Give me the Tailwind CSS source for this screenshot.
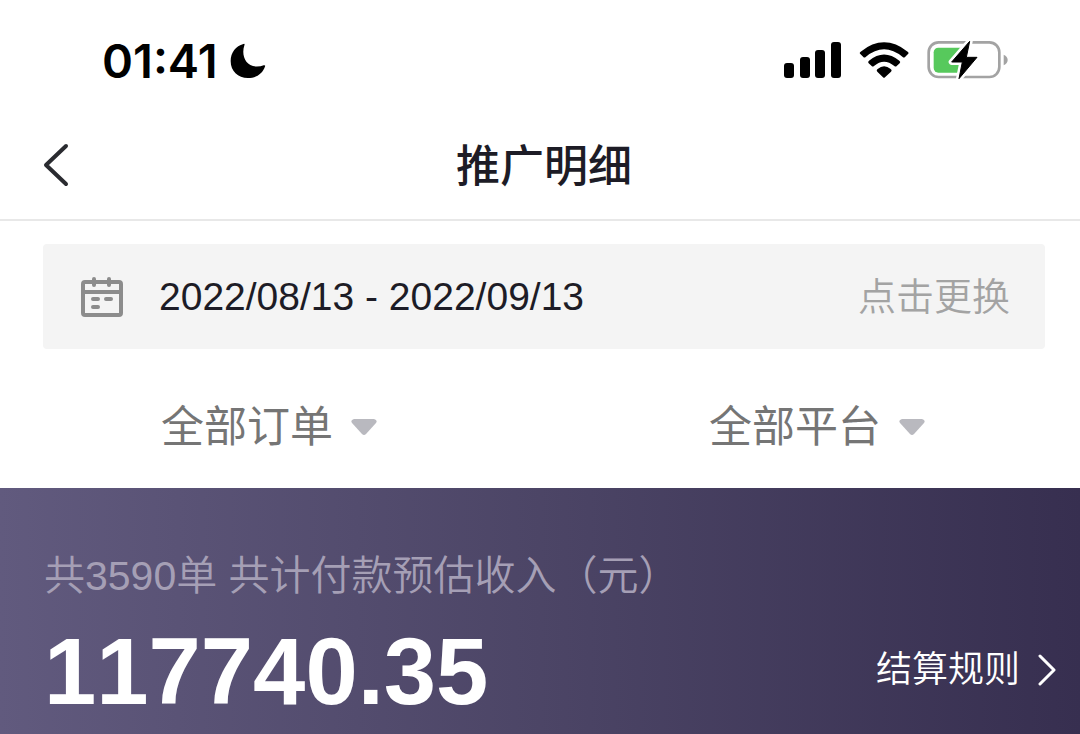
<!DOCTYPE html>
<html lang="zh-CN">
<head>
    <meta charset="UTF-8">
    <meta name="viewport" content="width=device-width, initial-scale=1.0">
    <title>推广明细</title>
    <script src="https://cdn.jsdelivr.net/npm/@tailwindcss/browser@4"></script>
</head>

<body class="bg-white font-['Liberation_Sans','Noto_Sans_CJK_SC',sans-serif]">

<div class="flex min-h-screen flex-col">

    <!-- Status bar -->
    <div class="flex h-[110px] items-center justify-between pt-[10px] pr-[71px] pl-[102px] text-black">
        <div class="flex items-center gap-3">
            <span class="font-['Inter',sans-serif] text-[47px] leading-none font-semibold">01:41</span>
            <svg class="h-9 w-9" viewBox="418 37 110 108" fill="currentColor" aria-hidden="true">
                <path d="M459 42Q464 40 462 46C452 74 464 111 500 111Q512 111 521 107Q527 106 525 111C517 134 498 146 473 146C442 146 420 125 420 94C420 68 436 48 459 42Z"/>
            </svg>
        </div>
        <div class="flex items-center gap-[18px]">
            <svg class="h-9 w-[57px]" viewBox="0 0 57 36" fill="currentColor" aria-hidden="true">
                <rect x="0" y="21" width="10" height="15" rx="3"/>
                <rect x="16" y="15" width="10" height="21" rx="3"/>
                <rect x="31" y="8" width="10" height="28" rx="3"/>
                <rect x="47" y="0" width="10" height="36" rx="3"/>
            </svg>
            <svg class="h-9 w-[50px]" viewBox="269 35 150 108" fill="currentColor" aria-hidden="true">
                <path d="M273 71Q269 68 274 64Q344 8 415 64Q420 68 416 71L407 80Q404 83 400 80Q344 34 289 80Q285 83 282 80Z"/>
                <path d="M298 99Q294 95 299 91Q344 54 390 91Q395 95 391 99L382 107Q379 110 375 107Q344 81 314 107Q310 110 307 107Z"/>
                <path d="M324 124Q320 120 325 116Q344 100 364 116Q369 120 365 124L347 141Q344 144 341 141Z"/>
            </svg>
            <svg class="h-10 w-[82px]" viewBox="474 30 246 120" aria-hidden="true">
                <rect x="479" y="37" width="212" height="104" rx="30" fill="none" stroke="#a3a3a3" stroke-width="8"/>
                <path d="M704 74Q716 80 716 90Q716 100 704 106Z" fill="#a3a3a3"/>
                <rect x="494" y="53" width="94" height="75" rx="14" fill="#57c95c"/>
                <path d="M602 34L548 96H580L570 146L624 82H592Z" fill="#fff" stroke="#fff" stroke-width="18" stroke-linejoin="round"/>
                <path d="M602 34L548 96H580L570 146L624 82H592Z" fill="#000" stroke="#000" stroke-width="3" stroke-linejoin="round"/>
            </svg>
        </div>
    </div>

    <!-- Title bar -->
    <header class="grid h-[111px] grid-cols-[1fr_auto_1fr] items-center border-b-2 border-[#e8e8e8] pr-[35px] pl-[43px] text-[#1d1c26]">
        <button type="button" aria-label="返回" class="w-7">
            <svg class="h-11 w-7" viewBox="0 0 28 44" fill="none" stroke="#2a2b30" stroke-width="4" stroke-linecap="round" stroke-linejoin="round">
                <path d="M23 3L3 22L23 41"/>
            </svg>
        </button>
        <h1 class="pt-1 text-[44px] leading-none font-medium">推广明细</h1>
    </header>

    <!-- Date range -->
    <button type="button" class="mt-[23px] mr-[35px] ml-[43px] flex h-[105px] items-center rounded-sm bg-[#f4f4f4] pr-[35px] pl-[38px] text-left">
        <svg class="h-10 w-[42px]" viewBox="0 0 42 40" fill="none" stroke="#8c8c8c" stroke-width="4" aria-hidden="true">
            <rect x="2" y="5" width="38" height="33" rx="2"/>
            <path d="M2 15H40"/>
            <path d="M13 2V8M28 2V8" stroke-linecap="round"/>
            <path d="M12 22H17M25 22H30M12 30H17" stroke-linecap="round"/>
        </svg>
        <span class="ml-9 grow text-[39px] leading-none text-[#1d1c26]">2022/08/13 - 2022/09/13</span>
        <span class="text-[38px] leading-none font-[350] text-[#a3a3a3]">点击更换</span>
    </button>

    <!-- Filters -->
    <div class="flex h-[139px] items-center justify-between pt-4 pr-[155px] pl-[161px]">
        <label class="relative flex items-center">
            <select aria-label="订单" class="h-16 appearance-none pr-[44px] text-[43px] text-[#757575]">
                <option>全部订单</option>
            </select>
            <svg class="pointer-events-none absolute right-0 h-4 w-[26px]" viewBox="0 0 26 16" fill="#b9b9bf" aria-hidden="true">
                <path d="M3 0H23Q27 1 25 4L15 15Q13 17 11 15L1 4Q-1 1 3 0Z"/>
            </svg>
        </label>
        <label class="relative flex items-center">
            <select aria-label="平台" class="h-16 appearance-none pr-[44px] text-[43px] text-[#757575]">
                <option>全部平台</option>
            </select>
            <svg class="pointer-events-none absolute right-0 h-4 w-[26px]" viewBox="0 0 26 16" fill="#b9b9bf" aria-hidden="true">
                <path d="M3 0H23Q27 1 25 4L15 15Q13 17 11 15L1 4Q-1 1 3 0Z"/>
            </svg>
        </label>
    </div>

    <!-- Income summary -->
    <section class="grow bg-linear-to-r from-[#615a7e] via-[#4c4566] to-[#372f50] pt-[58px] pr-6 pl-11">
        <p class="text-[41px] leading-[60px] font-[350] text-[#a59fb5]">共3590单 共计付款预估收入（元）</p>
        <div class="mt-4 flex items-center justify-between text-white">
            <strong class="text-[94px] leading-[100px] font-bold [font-kerning:none]">117740.35</strong>
            <a href="#" class="flex items-center gap-[18px] pb-1 text-[36px] leading-none font-[350]">
                结算规则
                <svg class="h-8 w-[18px]" viewBox="0 0 18 32" fill="none" stroke="currentColor" stroke-width="3" stroke-linecap="round" stroke-linejoin="round" aria-hidden="true">
                    <path d="M2 2L16 16L2 30"/>
                </svg>
            </a>
        </div>
    </section>
</div>

</body>
</html>
